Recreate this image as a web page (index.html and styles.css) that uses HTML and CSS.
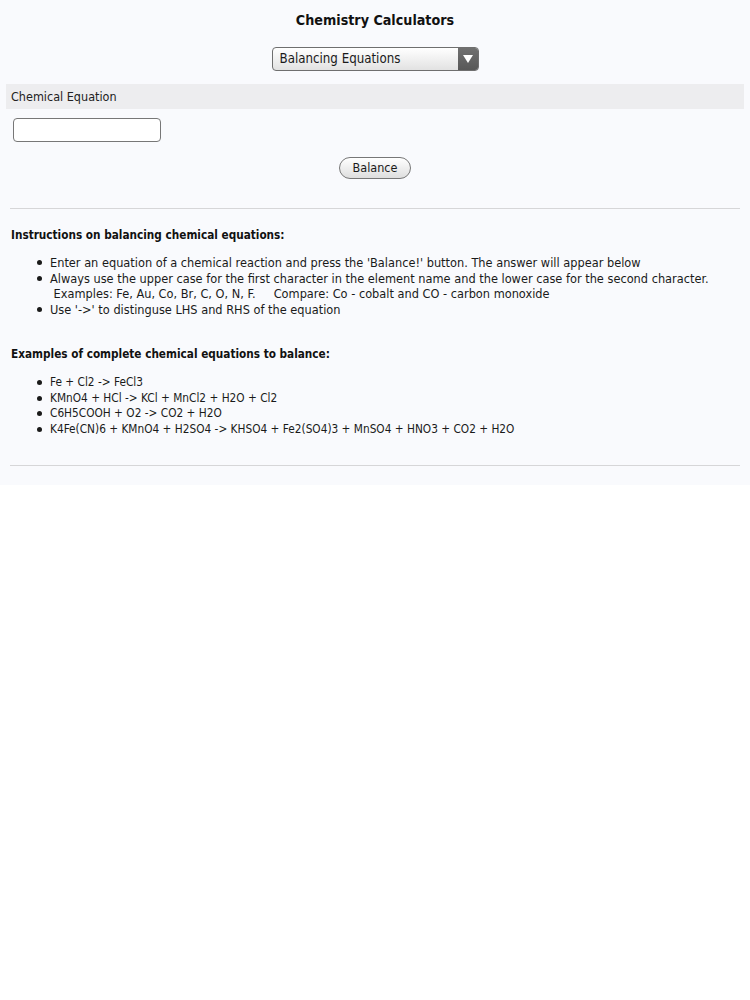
FILE: index.html
```html
<!DOCTYPE html>
<html>
<head>
<meta charset="utf-8">
<link rel="stylesheet" href="styles.css">
</head>
<body>
<div class="page">
  <h1 class="title">Chemistry Calculators</h1>
  <div class="select-row">
    <div class="select">
      <span class="select-label">Balancing Equations</span>
      <span class="select-arrow"><svg width="10" height="8" viewBox="0 0 10 8"><polygon points="0,0 10,0 5,8" fill="#fff"/></svg></span>
    </div>
  </div>
  <div class="bar">Chemical Equation</div>
  <div class="input-row"><div class="input"></div></div>
  <div class="button-row"><div class="button">Balance</div></div>
  <div class="rule"></div>
  <div class="section">
    <div class="heading">Instructions on balancing chemical equations:</div>
    <ul class="list">
      <li>Enter an equation of a chemical reaction and press the 'Balance!' button. The answer will appear below</li>
      <li>Always use the upper case for the first character in the element name and the lower case for the second character.<br>&nbsp;Examples: Fe, Au, Co, Br, C, O, N, F. &nbsp;&nbsp;&nbsp;&nbsp;Compare: Co - cobalt and CO - carbon monoxide</li>
      <li>Use '-&gt;' to distinguse LHS and RHS of the equation</li>
    </ul>
    <div class="heading">Examples of complete chemical equations to balance:</div>
    <ul class="list examples">
      <li>Fe + Cl2 -&gt; FeCl3</li>
      <li>KMnO4 + HCl -&gt; KCl + MnCl2 + H2O + Cl2</li>
      <li>C6H5COOH + O2 -&gt; CO2 + H2O</li>
      <li>K4Fe(CN)6 + KMnO4 + H2SO4 -&gt; KHSO4 + Fe2(SO4)3 + MnSO4 + HNO3 + CO2 + H2O</li>
    </ul>
  </div>
  <div class="rule rule2"></div>
</div>
</body>
</html>
```
FILE: styles.css
```css
html, body { margin: 0; padding: 0; background: #ffffff; }
body { font-family: "DejaVu Sans Condensed", "DejaVu Sans", sans-serif; color: #1a1a1a; }
.page { background: #f9fafd; padding: 10px 6px 19px 6px; }
.title { margin: 0; text-align: center; font-size: 14.2px; font-weight: bold; line-height: 20px; color: #111; }
.select-row { display: flex; justify-content: center; margin-top: 17px; }
.select { width: 205px; height: 22px; border: 1px solid #6f6f6f; border-radius: 4px; display: flex; overflow: hidden;
  background: linear-gradient(#ffffff, #e2e2e2); box-sizing: content-box; }
.select-label { flex: 1; font-size: 13.2px; line-height: 22px; padding-left: 7px; color: #1a1a1a; }
.select-arrow { width: 20px; background: linear-gradient(#707070, #585858); display: flex; align-items: center; justify-content: center; }
.bar { margin-top: 13px; height: 25px; line-height: 26px; background: #ededef; font-size: 12.5px; padding-left: 5px; color: #222; }
.input-row { margin-top: 9px; padding-left: 7px; }
.input { width: 146px; height: 22px; border: 1px solid #777; border-radius: 4px; background: #fff; }
.button-row { display: flex; justify-content: center; margin-top: 15px; }
.button { width: 70px; height: 20px; border: 1px solid #777; border-radius: 11px; text-align: center; font-size: 12.5px; line-height: 20px;
  background: linear-gradient(#ffffff, #dedede); color: #1a1a1a; }
.rule { margin: 29px 4px 0 4px; height: 1px; background: #d6d6d8; }
.section { padding: 19px 0 0 5px; }
.heading { font-weight: bold; font-size: 11.7px; line-height: 15px; color: #111; }
.list { margin: 12px 0 30px 0; padding-left: 39px; font-size: 12.65px; line-height: 15.5px; list-style: none; }
.list li { position: relative; }
.list li::before { content: ""; position: absolute; left: -13px; top: 5px; width: 5px; height: 5px; border-radius: 50%; background: #1a1a1a; }
.examples { font-size: 11.75px; margin-top: 13px; }
.section .list:last-child { margin-bottom: 0; }
.rule2 { margin-top: 28px; }
```
